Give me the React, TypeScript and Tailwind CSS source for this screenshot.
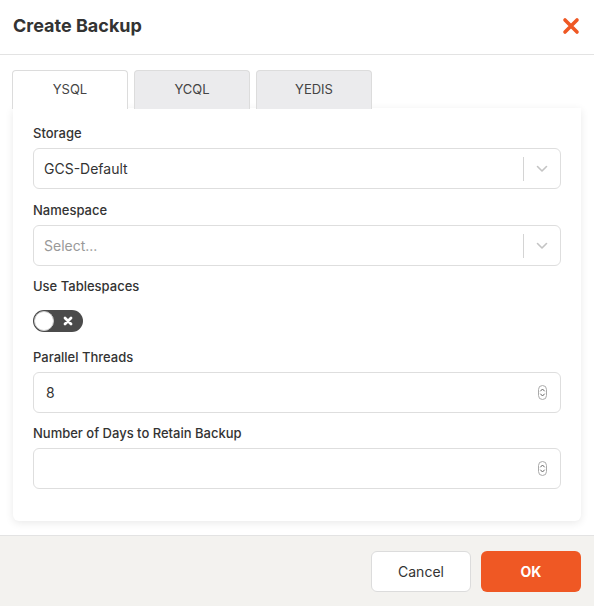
import React from "react";

function Chevron() {
  return (
    <svg width="12" height="8" viewBox="0 0 12 8" fill="none">
      <path d="M1.5 1.5 6 6l4.5-4.5" stroke="#c4c4c4" strokeWidth="1.6" strokeLinecap="round" strokeLinejoin="round" />
    </svg>
  );
}

function Spinner() {
  return (
    <svg width="9" height="15" viewBox="0 0 9 15" fill="none">
      <rect x="0.5" y="0.5" width="8" height="14" rx="4" stroke="#aaa" fill="#fff" />
      <path d="M2.6 6 4.5 4l1.9 2M2.6 9l1.9 2 1.9-2" stroke="#666" strokeWidth="1" strokeLinecap="round" strokeLinejoin="round" />
    </svg>
  );
}

function SelectBox({ value, placeholder }: { value?: string; placeholder?: string }) {
  return (
    <div className="flex h-[41px] items-center rounded-[6px] border border-[#dedede] bg-white">
      <div className={`flex-1 pl-[10px] text-[14px] ${value ? "text-[#333]" : "text-[#999]"}`}>{value ?? placeholder}</div>
      <div className="h-[24px] w-px bg-[#d4d4d4]" />
      <div className="flex w-[36px] justify-center">
        <Chevron />
      </div>
    </div>
  );
}

function NumberBox({ value }: { value?: string }) {
  return (
    <div className="flex h-[41px] items-center rounded-[6px] border border-[#dedede] bg-white pl-[12px] pr-[13px]">
      <div className="flex-1 text-[14px] text-[#333]">{value}</div>
      <Spinner />
    </div>
  );
}

function Label({ children }: { children: React.ReactNode }) {
  return <div className="mb-[5px] text-[13px] leading-[20px] font-medium text-[#333]">{children}</div>;
}

export default function App() {
  const tabs = ["YSQL", "YCQL", "YEDIS"];
  return (
    <div className="flex h-[606px] w-[594px] flex-col bg-white font-['Inter',sans-serif]">
      <div className="flex h-[55px] items-center justify-between border-b border-[#e3e3e3] pb-[3px] pl-[13px] pr-[14px]">
        <h1 className="text-[18px] font-bold text-[#333]">Create Backup</h1>
        <svg width="18" height="18" viewBox="0 0 18 18">
          <path d="M3 3l12 12M15 3 3 15" stroke="#ef5824" strokeWidth="3.6" strokeLinecap="round" />
        </svg>
      </div>

      <div className="flex-1 px-[13px] pt-[15px]">
        <div className="flex gap-[6px]">
          {tabs.map((t, i) => (
            <div
              key={t}
              className={`-mb-px flex h-[39px] w-[116px] items-center justify-center rounded-t-[4px] border border-b-0 border-[#dcdcdc] text-[13px] text-[#444] ${
                i === 0 ? "relative z-10 -ml-px bg-white" : "bg-[#ebebed]"
              }`}
            >
              {t}
            </div>
          ))}
        </div>
        <div className="rounded-b-[6px] bg-white px-[20px] pt-[15px] pb-[32px] shadow-[0_2px_8px_rgba(0,0,0,0.09)]">
          <Label>Storage</Label>
          <SelectBox value="GCS-Default" />
          <div className="mt-[11px]">
            <Label>Namespace</Label>
            <SelectBox placeholder="Select..." />
          </div>
          <div className="mt-[10px]">
            <Label>Use Tablespaces</Label>
            <div className="mt-[14px] flex h-[22px] w-[50px] items-center rounded-full bg-[#4b4b4b] pl-[1px]">
              <div className="h-[20px] w-[20px] rounded-full border border-[#ccc] bg-white" />
              <svg className="ml-[9px]" width="10" height="10" viewBox="0 0 10 10">
                <path d="M2 2l6 6M8 2 2 8" stroke="#fff" strokeWidth="2.8" strokeLinecap="round" />
              </svg>
            </div>
          </div>
          <div className="mt-[15px]">
            <Label>Parallel Threads</Label>
            <NumberBox value="8" />
          </div>
          <div className="mt-[10px]">
            <Label>Number of Days to Retain Backup</Label>
            <NumberBox />
          </div>
        </div>
      </div>

      <div className="flex h-[71px] items-center justify-end gap-[10px] border-t border-[#e3e3e3] bg-[#f3f2ef] pr-[13px]">
        <button className="h-[41px] w-[100px] rounded-[6px] border border-[#dcdcdc] bg-white text-[14px] text-[#333]">Cancel</button>
        <button className="h-[41px] w-[100px] rounded-[6px] bg-[#ef5824] text-[14px] font-bold text-white">OK</button>
      </div>
    </div>
  );
}
